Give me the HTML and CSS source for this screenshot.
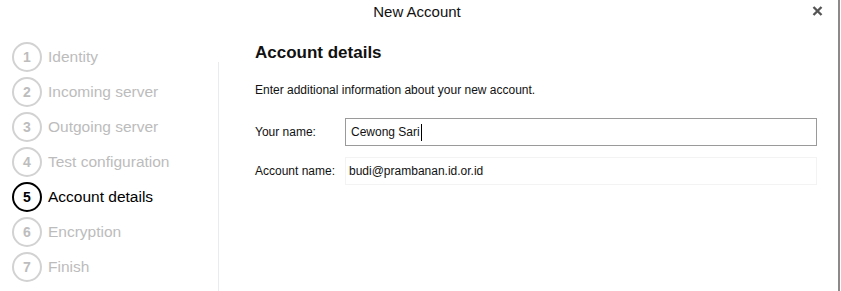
FILE: index.html
```html
<!DOCTYPE html>
<html>
<head>
<meta charset="utf-8">
<title>New Account</title>
<link rel="stylesheet" href="styles.css">
</head>
<body>
<div class="window">
  <header class="titlebar">
    <span class="spacer"></span>
    <h1 class="title">New Account</h1>
    <button class="close" aria-label="Close">
      <svg width="11" height="10" viewBox="0 0 11 10"><path d="M1.5 1 L9.5 9 M9.5 1 L1.5 9" stroke="#555" stroke-width="2.4" stroke-linecap="butt"/></svg>
    </button>
  </header>
  <div class="body">
    <nav class="steps">
      <div class="step"><span class="num">1</span><span class="label">Identity</span></div>
      <div class="step"><span class="num">2</span><span class="label">Incoming server</span></div>
      <div class="step"><span class="num">3</span><span class="label">Outgoing server</span></div>
      <div class="step"><span class="num">4</span><span class="label">Test configuration</span></div>
      <div class="step active"><span class="num">5</span><span class="label">Account details</span></div>
      <div class="step"><span class="num">6</span><span class="label">Encryption</span></div>
      <div class="step"><span class="num">7</span><span class="label">Finish</span></div>
    </nav>
    <div class="divider"></div>
    <main class="content">
      <h2 class="heading">Account details</h2>
      <p class="desc">Enter additional information about your new account.</p>
      <div class="field">
        <label class="field-label">Your name:</label>
        <div class="input focused">Cewong Sari<span class="caret"></span></div>
      </div>
      <div class="field">
        <label class="field-label">Account name:</label>
        <div class="input readonly">budi@prambanan.id.or.id</div>
      </div>
    </main>
  </div>
</div>
</body>
</html>
```

FILE: styles.css
```css
html, body {
  margin: 0;
  padding: 0;
  background: #fff;
}
body {
  width: 841px;
  height: 291px;
  overflow: hidden;
  font-family: "Liberation Sans", Arial, sans-serif;
  color: #000;
}
.window {
  width: 838px;
  height: 291px;
  border-right: 2px solid #8a8a8a;
  box-sizing: content-box;
  display: flex;
  flex-direction: column;
}
.titlebar {
  display: grid;
  grid-template-columns: 1fr auto 1fr;
  align-items: center;
  height: 24px;
}
.title {
  margin: 0;
  font-size: 15px;
  font-weight: normal;
  line-height: 24px;
  color: #111;
  position: relative;
  left: -2px;
}
.close {
  justify-self: end;
  border: 0;
  background: none;
  padding: 0;
  margin-right: 15px;
  margin-top: -2px;
  width: 11px;
  height: 10px;
  display: flex;
}
.body {
  flex: 1;
  display: flex;
}
.steps {
  width: 218px;
  padding-top: 15px;
  display: flex;
  flex-direction: column;
}
.step {
  height: 35px;
  display: flex;
  align-items: center;
  padding-left: 12px;
}
.num {
  width: 26px;
  height: 26px;
  border: 2px solid #d2d2d2;
  border-radius: 50%;
  display: flex;
  align-items: center;
  justify-content: center;
  font-size: 14px;
  font-weight: bold;
  color: #bdbdbd;
  flex: none;
}
.label {
  margin-left: 6px;
  font-size: 15.5px;
  color: #bcbcbc;
}
.step.active .num {
  border-color: #000;
  color: #000;
}
.step.active .label {
  color: #000;
}
.divider {
  width: 1px;
  background: #e8ecec;
  margin-top: 38px;
  flex: none;
}
.content {
  flex: 1;
  padding-left: 36px;
  padding-right: 21px;
  padding-top: 19px;
}
.heading {
  margin: 0;
  font-size: 17px;
  font-weight: bold;
  line-height: 20px;
  color: #111;
}
.desc {
  margin: 20px 0 0 0;
  font-size: 12px;
  line-height: 14px;
  color: #111;
}
.field {
  display: flex;
  align-items: center;
  margin-top: 11px;
}
.desc + .field {
  margin-top: 21px;
}
.field-label {
  width: 90px;
  font-size: 12px;
  color: #111;
}
.input {
  flex: 1;
  height: 28px;
  box-sizing: border-box;
  display: flex;
  align-items: center;
  font-size: 12px;
  color: #111;
}
.input.focused {
  border: 1px solid #9a9a9a;
  padding-left: 5px;
}
.input.readonly {
  border: 1px solid #f3f3f3;
  padding-left: 3px;
}
.caret {
  display: inline-block;
  width: 1px;
  height: 17px;
  background: #000;
  margin-left: 1px;
}
```
